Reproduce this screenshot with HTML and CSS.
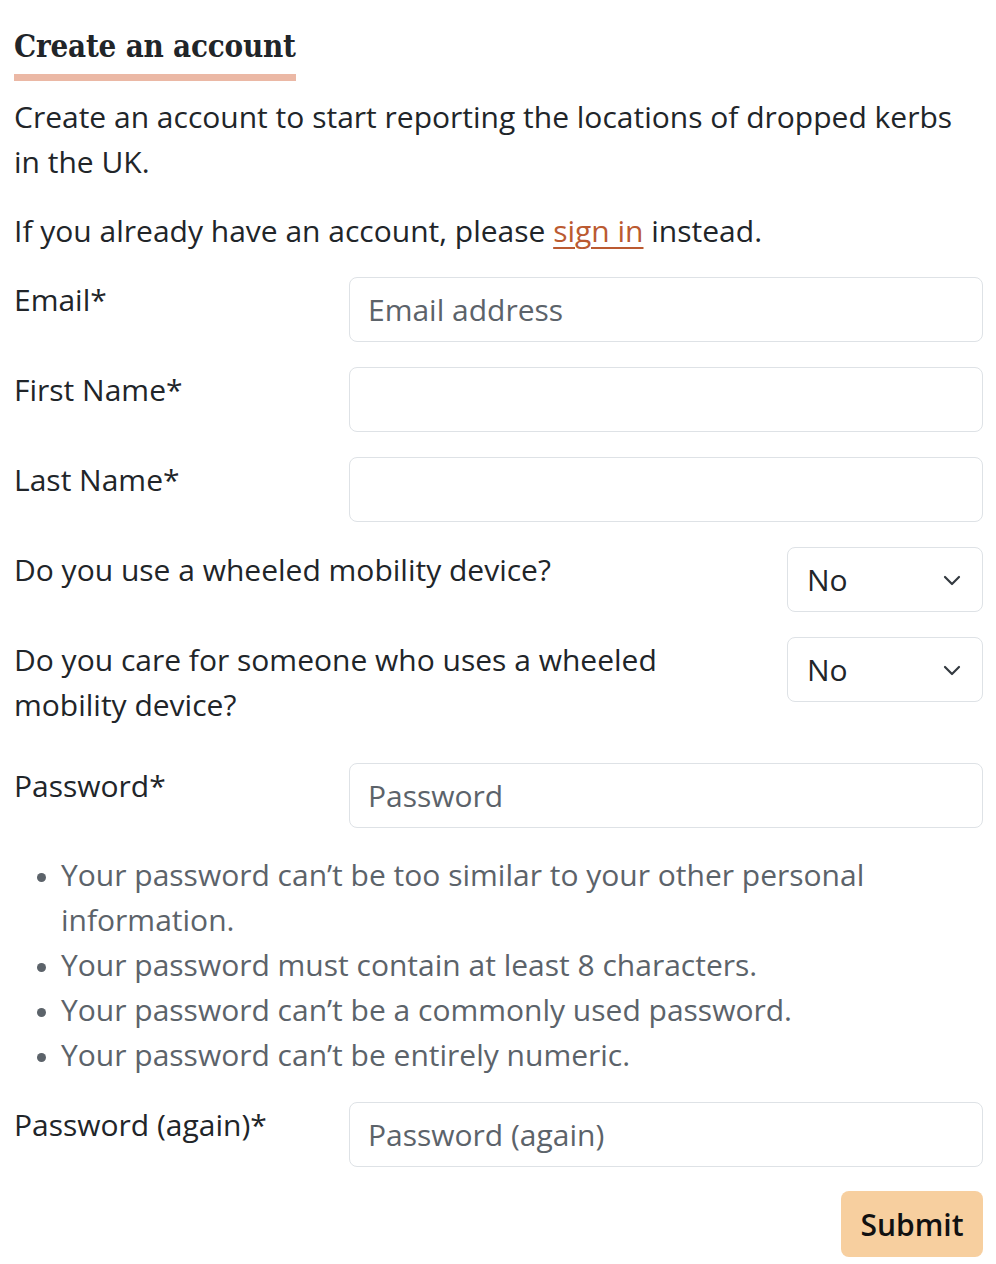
FILE: index.html
```html
<!DOCTYPE html>
<html lang="en">
<head>
<meta charset="utf-8">
<title>Create an account</title>
<link rel="stylesheet" href="styles.css">
</head>
<body>
<main class="page">
  <h1 class="title">Create an account</h1>
  <p class="intro">Create an account to start reporting the locations of dropped kerbs in the UK.</p>
  <p class="intro">If you already have an account, please <a href="#" class="link">sign in</a> instead.</p>

  <form class="form">
    <div class="row">
      <label class="label" for="email">Email*</label>
      <input class="input" id="email" type="email" placeholder="Email address">
    </div>
    <div class="row">
      <label class="label" for="first">First Name*</label>
      <input class="input" id="first" type="text">
    </div>
    <div class="row">
      <label class="label" for="last">Last Name*</label>
      <input class="input" id="last" type="text">
    </div>
    <div class="row row-select">
      <label class="label label-wide" for="wheel">Do you use a wheeled mobility device?</label>
      <div class="select-wrap">
        <select class="select" id="wheel"><option>No</option><option>Yes</option></select>
        <svg class="chevron" width="18" height="12" viewBox="0 0 18 12"><path d="M2 3 L9 10 L16 3" fill="none" stroke="#343a40" stroke-width="2.2" stroke-linecap="round" stroke-linejoin="round"/></svg>
      </div>
    </div>
    <div class="row row-select row-tall">
      <label class="label label-wide" for="care">Do you care for someone who uses a wheeled mobility device?</label>
      <div class="select-wrap">
        <select class="select" id="care"><option>No</option><option>Yes</option></select>
        <svg class="chevron" width="18" height="12" viewBox="0 0 18 12"><path d="M2 3 L9 10 L16 3" fill="none" stroke="#343a40" stroke-width="2.2" stroke-linecap="round" stroke-linejoin="round"/></svg>
      </div>
    </div>
    <div class="row">
      <label class="label" for="pw">Password*</label>
      <input class="input" id="pw" type="password" placeholder="Password">
    </div>
    <ul class="help">
      <li>Your password can’t be too similar to your other personal information.</li>
      <li>Your password must contain at least 8 characters.</li>
      <li>Your password can’t be a commonly used password.</li>
      <li>Your password can’t be entirely numeric.</li>
    </ul>
    <div class="row row-last">
      <label class="label" for="pw2">Password (again)*</label>
      <input class="input" id="pw2" type="password" placeholder="Password (again)">
    </div>
    <div class="actions">
      <button class="submit" type="submit">Submit</button>
    </div>
  </form>
</main>
</body>
</html>
```
FILE: styles.css
```css
* { box-sizing: border-box; }
html, body { margin: 0; padding: 0; background: #fff; }
body {
  font-family: "Open Sans", "Noto Sans", sans-serif;
  font-size: 30px;
  line-height: 45px;
  color: #212529;
}
.page {
  padding: 23px 13px 0 14px;
}
.title {
  display: inline-block;
  margin: 0;
  font-family: "DejaVu Serif Condensed", "DejaVu Serif", "Liberation Serif", serif;
  font-stretch: condensed;
  font-weight: 700;
  font-size: 31px;
  line-height: 46px;
  color: #212529;
  padding-bottom: 5px;
  border-bottom: 7px solid #ebb8a5;
  letter-spacing: -0.2px;
}
.intro {
  margin: 13px 0 0;
}
.intro + .intro { margin-top: 24px; }
.link {
  color: #bb5a31;
  text-decoration: underline;
  text-underline-offset: 5px;
  text-decoration-thickness: 2px;
}
.form {
  margin-top: 24px;
  display: flex;
  flex-direction: column;
}
.row {
  display: flex;
  align-items: flex-start;
  margin-bottom: 25px;
}
.row-last { margin-bottom: 24px; }
.label {
  width: 335px;
  flex: 0 0 335px;
}
.label-wide {
  flex: 1 1 auto;
  width: auto;
  padding-right: 110px;
}
.row-tall { margin-bottom: 36px; }
.input {
  flex: 1 1 auto;
  height: 65px;
  border: 1.5px solid #dee2e6;
  border-radius: 8px;
  padding: 0 18px;
  font-family: inherit;
  font-size: 30px;
  color: #212529;
  background: #fff;
  outline: none;
}
.input::placeholder { color: #5c636a; opacity: 1; }
.select-wrap {
  position: relative;
  flex: 0 0 196px;
  width: 196px;
}
.select {
  appearance: none;
  -webkit-appearance: none;
  width: 100%;
  height: 65px;
  border: 1.5px solid #dee2e6;
  border-radius: 8px;
  padding: 0 19px;
  font-family: inherit;
  font-size: 30px;
  color: #212529;
  background: #fff;
}
.chevron {
  position: absolute;
  right: 22px;
  top: 27px;
  pointer-events: none;
}
.help {
  margin: -1px 0 25px;
  padding-left: 47px;
  color: #5c636a;
}
.help li::marker { font-size: 24px; }
.actions {
  display: flex;
  justify-content: flex-end;
}
.submit {
  font-family: inherit;
  font-size: 30px;
  font-weight: 600;
  color: #111;
  background: #f7cf9f;
  border: none;
  border-radius: 8px;
  width: 142px;
  height: 66px;
  padding: 0;
}
```
